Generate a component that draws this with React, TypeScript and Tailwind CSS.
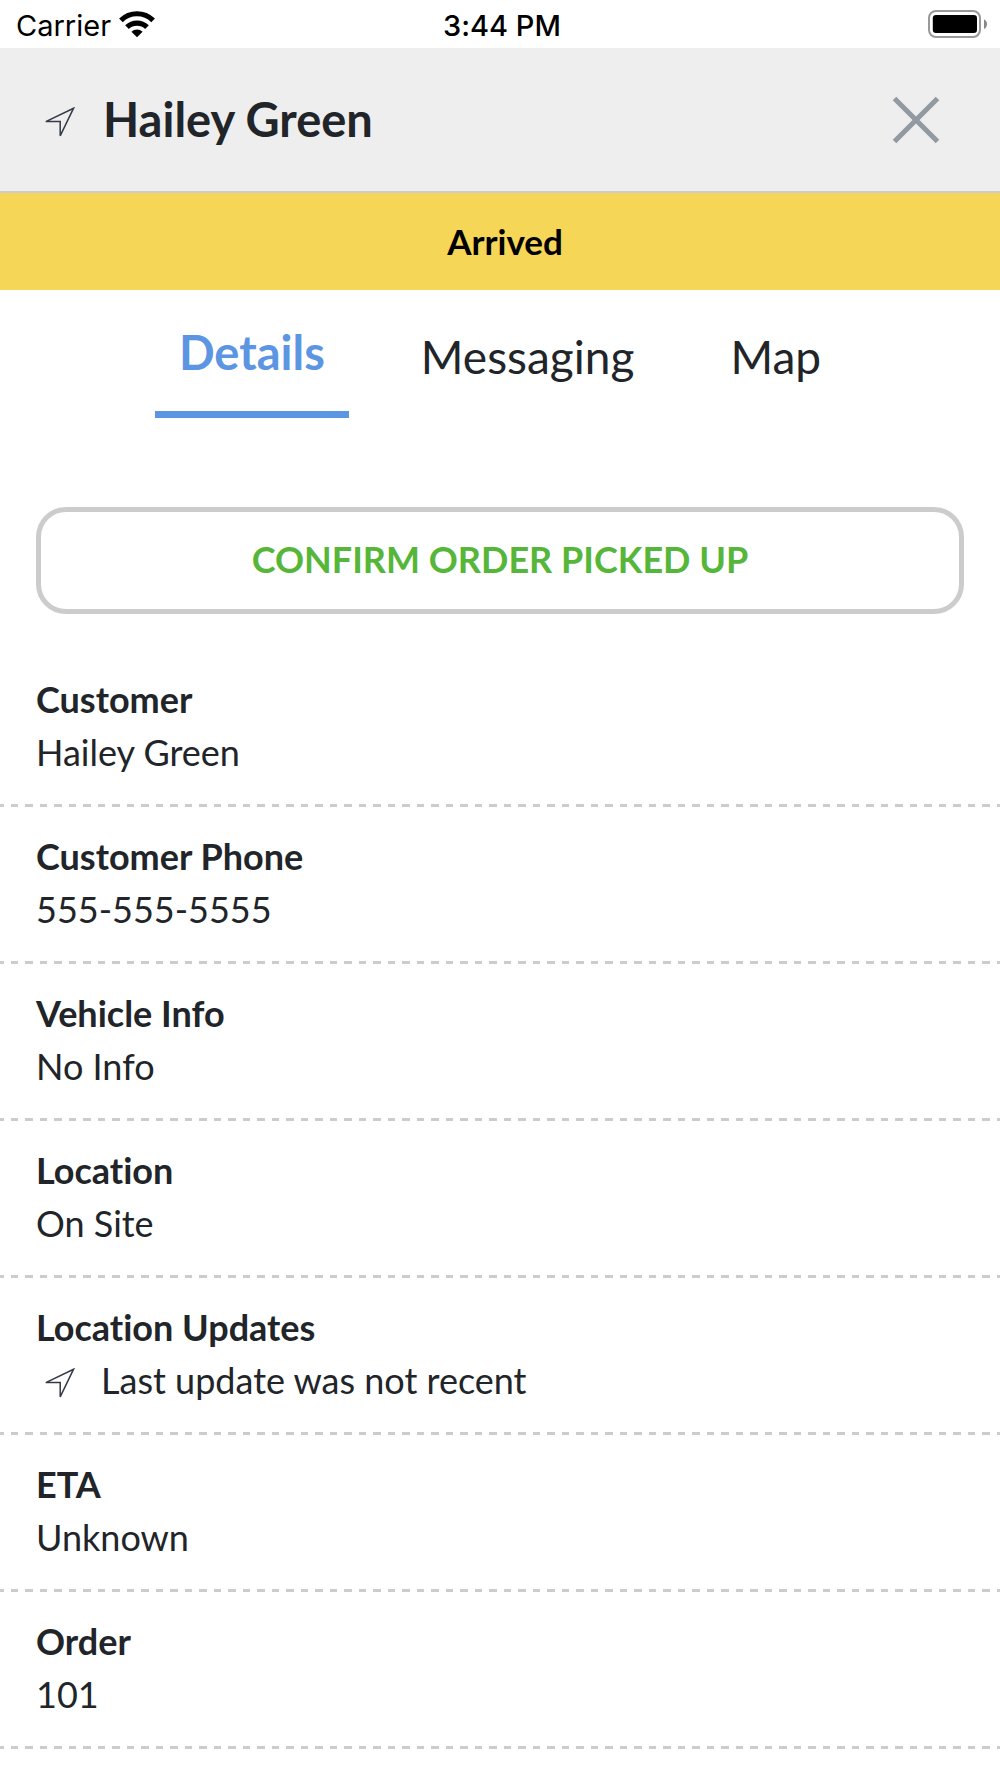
import { useState } from "react";

const tabs = ["Details", "Messaging", "Map"];

const details = [
  { label: "Customer", value: "Hailey Green" },
  { label: "Customer Phone", value: "555-555-5555" },
  { label: "Vehicle Info", value: "No Info" },
  { label: "Location", value: "On Site" },
  { label: "Location Updates", value: "Last update was not recent", hasIcon: true },
  { label: "ETA", value: "Unknown" },
  { label: "Order", value: "101" },
];

function LocationArrow() {
  return (
    <svg viewBox="0 0 30 30" className="w-[30px] h-[30px] mt-1 shrink-0" fill="none" stroke="#343a46" strokeWidth="1.5" aria-hidden="true">
      <path d="M28.6 1.2.8 14.6h14.4v14.2z" />
    </svg>
  );
}

function StatusBar() {
  return (
    <div className="grid grid-cols-3 items-center h-12 pl-4 pr-3 bg-white text-black text-[29px] leading-[44px] font-['Inter',sans-serif]">
      <div className="flex items-center gap-2">
        <span className="pt-1">Carrier</span>
        <svg viewBox="0 0 36 28" className="w-9 h-7" fill="none" stroke="#000" strokeWidth="5.2" aria-label="Wi-Fi">
          <path d="M1.9 10.3a23 23 0 0 1 32.2 0" />
          <path d="M8 17.1a14.4 14.4 0 0 1 20 0" />
          <path d="M18 27.2l-5.6-5.5a8.2 8.2 0 0 1 11.2 0z" fill="#000" stroke="none" />
        </svg>
      </div>
      <span className="pt-1 text-center font-medium">3:44 PM</span>
      <svg viewBox="0 0 60 28" className="w-[60px] h-7 justify-self-end" aria-label="Battery">
        <rect x="1" y="1" width="51" height="26" rx="7" fill="none" stroke="#999" strokeWidth="2" />
        <rect x="4.8" y="5" width="44.2" height="18" rx="3.2" fill="#000" />
        <path d="M56 9.3c4 2 4 7.8 0 9.8z" fill="#888" />
      </svg>
    </div>
  );
}

export default function App() {
  const [activeTab, setActiveTab] = useState("Details");

  return (
    <div className="min-h-screen bg-white text-[#212529] font-['Lato',sans-serif] [font-variant-ligatures:none]">
      <StatusBar />

      {/* Header */}
      <header className="flex items-center h-[145px] pl-[45px] pr-[60px] bg-[#eee] border-b-2 border-[#ccc]">
        <LocationArrow />
        <h1 className="ml-7 text-[47px] leading-[69px] font-bold">Hailey Green</h1>
        <button type="button" aria-label="Close" className="ml-auto">
          <svg viewBox="0 0 48 48" className="w-12 h-12" stroke="#9299a0" strokeWidth="5" aria-hidden="true">
            <path d="M2.5 2.5l43 43M45.5 2.5l-43 43" />
          </svg>
        </button>
      </header>

      {/* Status */}
      <div className="h-[97px] pl-[10px] bg-[#f5d657] text-black text-[35px] leading-[97px] font-bold text-center">
        Arrived
      </div>

      {/* Tabs */}
      <nav className="flex items-center justify-center gap-12 pt-1">
        {tabs.map((tab) => (
          <button
            key={tab}
            type="button"
            onClick={() => setActiveTab(tab)}
            className={
              activeTab === tab
                ? "px-6 py-6 text-[47px] leading-[69px] font-bold text-[#5c95e2] border-b-[7px] border-[#5c95e2]"
                : "px-6 py-6 text-[46px] leading-[69px]"
            }
          >
            {tab}
          </button>
        ))}
      </nav>

      <div className="px-9 pt-[89px] pb-9">
        <button
          type="button"
          className="w-full h-[107px] pb-1 border-[5px] border-[#ccc] rounded-[30px] text-[#56b639] text-[36px] leading-[54px] font-bold"
        >
          CONFIRM ORDER PICKED UP
        </button>
      </div>

      {/* Order details */}
      <dl>
        {details.map(({ label, value, hasIcon }) => (
          <div key={label}>
            <div className="px-9 pt-[23px] pb-[25px] text-[36px] leading-[53px]">
              <dt className="font-bold">{label}</dt>
              <dd className={hasIcon ? "flex items-center gap-[26px] pl-[9px]" : ""}>
                {hasIcon && <LocationArrow />}
                {value}
              </dd>
            </div>
            <div className="h-[3px] bg-[repeating-linear-gradient(90deg,#ccc_0_4px,transparent_4px_11px,#ccc_11px_18px,transparent_18px_25px,#ccc_25px_29px)]" />
          </div>
        ))}
      </dl>
    </div>
  );
}
